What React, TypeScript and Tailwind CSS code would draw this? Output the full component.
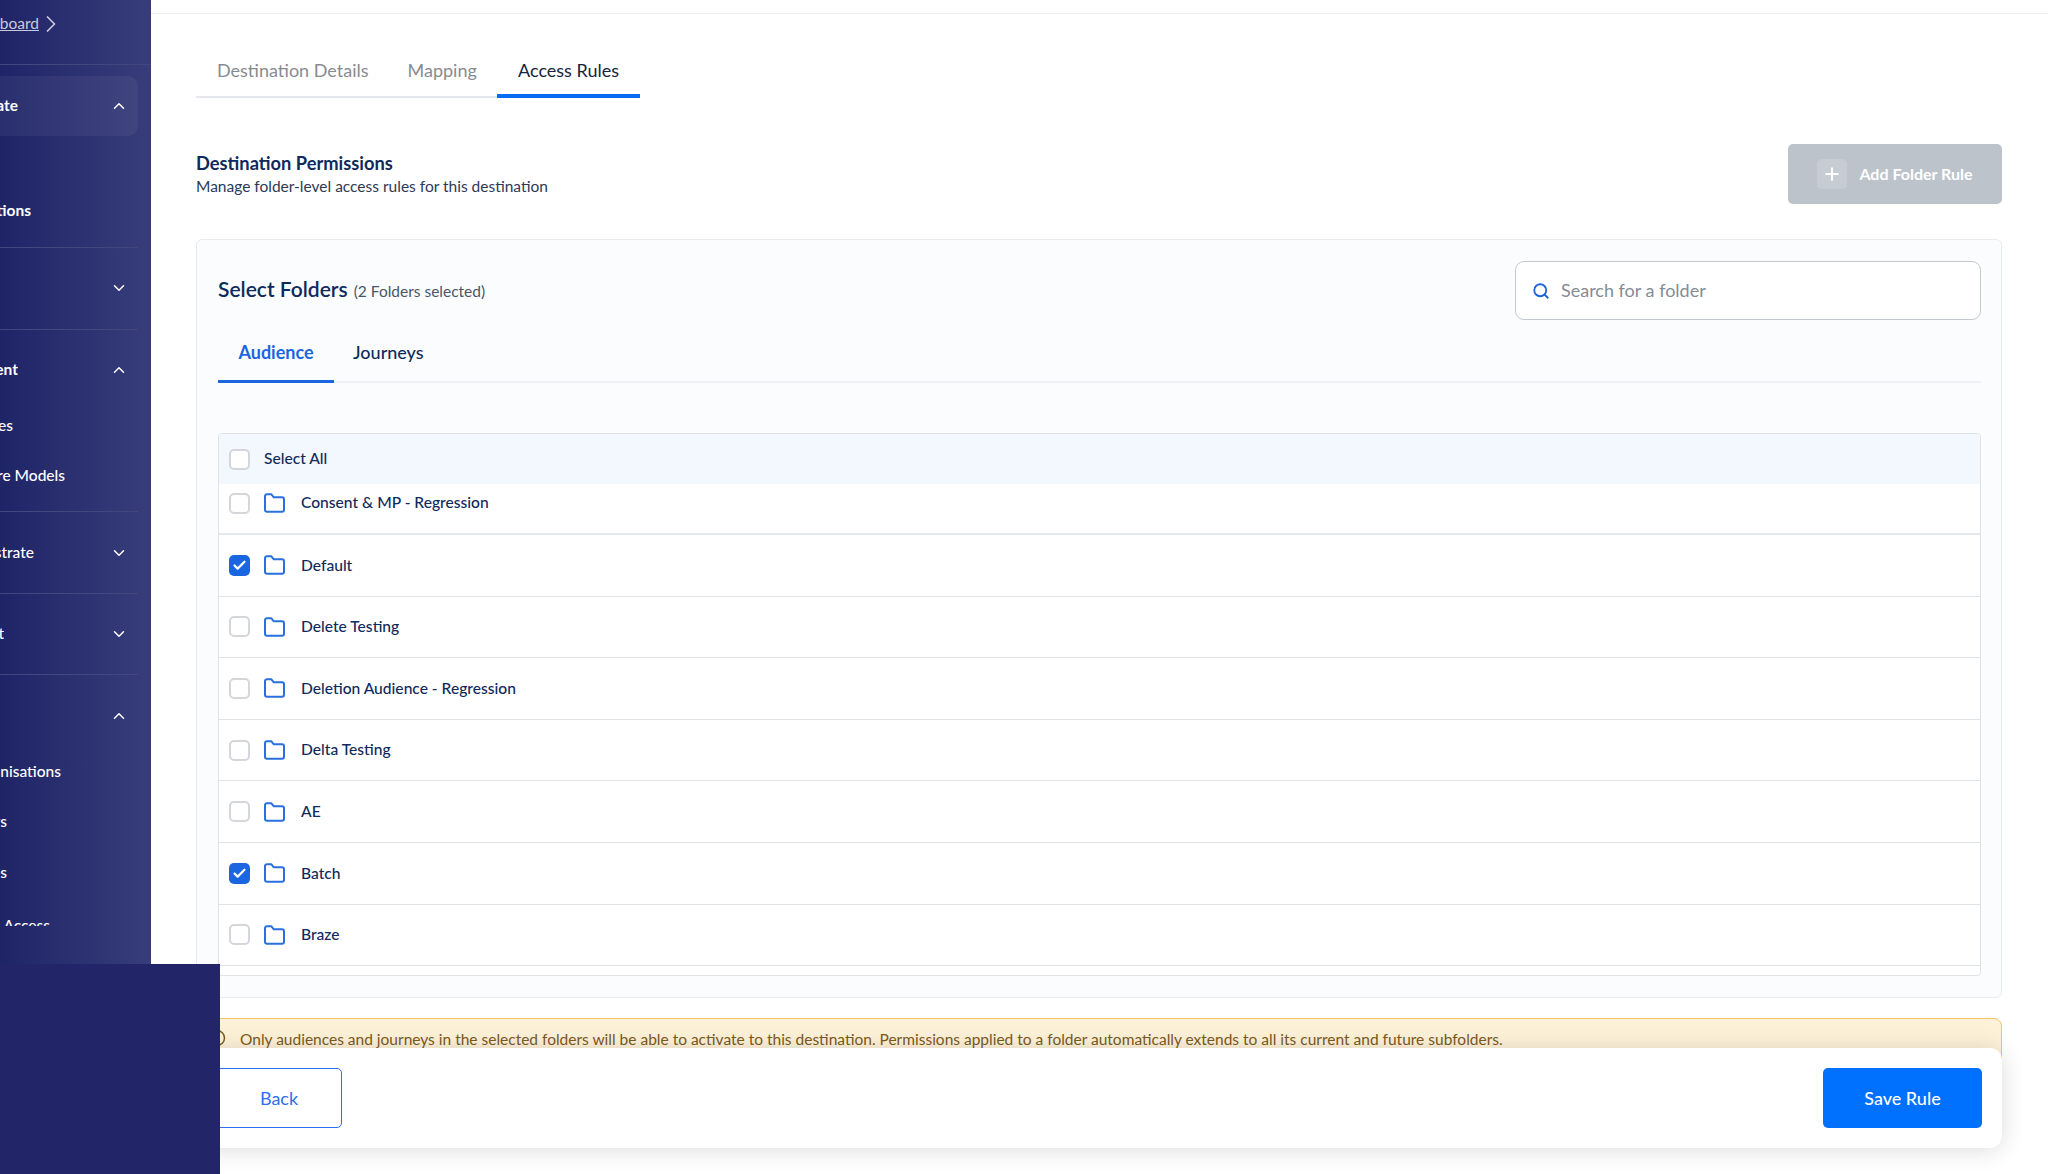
import { Check, ChevronDown, ChevronRight, ChevronUp, Info, Plus, Search } from 'lucide-react';

const folders = [
  { name: 'Default', checked: true },
  { name: 'Delete Testing', checked: false },
  { name: 'Deletion Audience - Regression', checked: false },
  { name: 'Delta Testing', checked: false },
  { name: 'AE', checked: false },
  { name: 'Batch', checked: true },
  { name: 'Braze', checked: false },
];

function Checkbox({ checked }: { checked?: boolean }) {
  if (checked) {
    return (
      <span className="flex h-[21px] w-[21px] shrink-0 items-center justify-center rounded-[5px] bg-[#1a66e0]">
        <Check size={15} strokeWidth={3.5} className="text-white" />
      </span>
    );
  }
  return <span className="h-[21px] w-[21px] shrink-0 rounded-[5px] border-2 border-[#d3d6da] bg-white" />;
}

function FolderIcon() {
  return (
    <svg width="21" height="20" viewBox="0 0 21 20" fill="none" className="ml-[14px] shrink-0 text-[#2a6fe0]">
      <path
        d="M3 1.2h4.2l2.6 3.1H18a2 2 0 0 1 2 2v10.5a2 2 0 0 1-2 2H3a2 2 0 0 1-2-2V3.2a2 2 0 0 1 2-2z"
        stroke="currentColor"
        strokeWidth="2"
        strokeLinejoin="round"
      />
    </svg>
  );
}

// the sidebar labels run off the left edge, so they are right aligned in a clipped box
function NavRow({ label, width, bold, open, className }: { label: string; width: string; bold?: boolean; open?: boolean; className?: string }) {
  return (
    <div className={`flex items-center justify-between ${className ?? ''}`}>
      <div className={`flex justify-end overflow-hidden whitespace-nowrap text-[15.5px] text-white ${width} ${bold ? 'font-bold' : 'font-medium'}`}>
        <span className="shrink-0">{label}</span>
      </div>
      {open === undefined ? null : open ? (
        <ChevronUp size={18} className="text-white" />
      ) : (
        <ChevronDown size={18} className="text-white" />
      )}
    </div>
  );
}

function Sidebar() {
  return (
    <aside className="h-[964px] w-[151px] shrink-0 overflow-hidden bg-gradient-to-r from-[#1f2467] to-[#383d7a]">
      <div className="h-[926px] overflow-hidden">
        <div className="flex h-[65px] items-center border-b border-[#42477f] pb-[17px]">
          <div className="flex w-[39px] justify-end overflow-hidden whitespace-nowrap text-[15.5px] text-[#c9cbdc] underline">
            <span className="shrink-0">Dashboard</span>
          </div>
          <ChevronRight size={28} strokeWidth={1.5} className="-ml-[2px] text-[#c9cbdc]" />
        </div>
        <div className="mr-[13px] border-b border-[#42477f] pt-[11px]">
          <NavRow label="Activate" width="w-[18px]" bold open className="h-[60px] rounded-r-[10px] bg-white/5 pr-[10px]" />
          <NavRow label="Destinations" width="w-[31px]" bold className="mt-[52px] h-[59px] pb-[13px]" />
        </div>
        <div className="mr-[13px] flex h-[82px] items-center border-b border-[#42477f] pb-[2px]">
          <NavRow label="" width="w-[1px]" open={false} className="w-full pr-[10px]" />
        </div>
        <div className="mr-[13px] h-[182px] border-b border-[#42477f] pt-[19px]">
          <NavRow label="Enrichment" width="w-[18px]" bold open className="h-[42px] pr-[10px]" />
          <NavRow label="Features" width="w-[13px]" className="mt-[15px] h-[40px]" />
          <NavRow label="Feature Models" width="w-[65px]" className="mt-[10px] h-[40px]" />
        </div>
        <div className="mr-[13px] flex h-[82px] items-center border-b border-[#42477f]">
          <NavRow label="Orchestrate" width="w-[34px]" open={false} className="w-full pr-[10px]" />
        </div>
        <div className="mr-[13px] flex h-[81px] items-center border-b border-[#42477f]">
          <NavRow label="Report" width="w-[4px]" open={false} className="w-full pr-[10px]" />
        </div>
        <NavRow label="" width="w-[1px]" open className="mr-[13px] mt-[20px] h-[42px] pr-[10px]" />
        <NavRow label="Organisations" width="w-[61px]" className="mt-[15px] h-[40px]" />
        <NavRow label="Users" width="w-[7px]" className="mt-[10px] h-[40px]" />
        <NavRow label="Roles" width="w-[7px]" className="mt-[11px] h-[40px]" />
        <NavRow label="Access" width="w-[50px]" className="mt-[13px] h-[40px]" />
      </div>
    </aside>
  );
}

export default function App() {
  return (
    <div className="relative flex h-[1174px] w-[2048px] overflow-hidden bg-white font-['Lato',sans-serif]">
      <Sidebar />
      <main className="min-w-0 flex-1">
        <div className="h-[14px] border-b border-[#eceef1]" />

        <div className="pl-[45px] pr-[46px]">
          <div className="mt-[38px] flex h-[46px] text-[18px] text-[#878b91]">
            <div className="flex w-[301px] items-start border-b-2 border-[#e4e7eb] pl-[21px] pt-[5px]">
              <span>Destination Details</span>
              <span className="ml-[39px]">Mapping</span>
            </div>
            <div className="w-[143px] border-b-4 border-[#0a6cf5] pt-[5px] text-center text-[#16233f]">Access Rules</div>
          </div>

          <div className="mt-[46px] flex h-[60px] items-center justify-between">
            <div>
              <h2 className="text-[18.3px] font-bold leading-[24px] text-[#0f2a5c]">Destination Permissions</h2>
              <p className="text-[15.5px] leading-[22px] text-[#2c3a55]">Manage folder-level access rules for this destination</p>
            </div>
            <button className="flex h-[60px] w-[214px] items-center justify-center gap-[12px] rounded-[5px] bg-[#bdc3ca] text-[16px] font-bold text-white">
              <span className="flex h-[30px] w-[30px] items-center justify-center rounded-[5px] bg-white/15">
                <Plus size={20} strokeWidth={2.5} />
              </span>
              Add Folder Rule
            </button>
          </div>

          <section className="mt-[35px] h-[759px] rounded-[6px] border border-[#e8ebef] bg-[#fbfcfd] pl-[21px] pr-[20px] pt-[21px]">
            <div className="flex h-[59px] items-center justify-between">
              <div className="flex -translate-y-[2px] items-baseline gap-[6px]">
                <h3 className="text-[21px] font-semibold text-[#0f2a5c]">Select Folders</h3>
                <span className="text-[15.5px] text-[#4a5568]">(2 Folders selected)</span>
              </div>
              <div className="flex h-[59px] w-[466px] items-center gap-[11px] rounded-[9px] border border-[#c4c9cf] bg-white pl-[16px]">
                <Search size={18} strokeWidth={2.4} className="text-[#1f63d8]" />
                <span className="text-[18px] text-[#858c95]">Search for a folder</span>
              </div>
            </div>

            <div className="mt-[7px] flex h-[56px] border-b-2 border-[#eef0f3] text-[18px]">
              <div className="h-[56px] w-[116px] border-b-[3px] border-[#1a66e0] pt-[12px] text-center font-bold text-[#1a66e0]">Audience</div>
              <div className="pl-[19px] pt-[12px] font-medium text-[#0f2a5c]">Journeys</div>
            </div>

            <div className="mt-[50px] h-[543px] overflow-hidden rounded-[4px] border border-[#dfe3e8] bg-white text-[15.6px] font-medium text-[#0f2a5c]">
              <div className="flex h-[50px] items-center gap-[14px] bg-[#f3f7fe] pl-[10px]">
                <Checkbox />
                <span>Select All</span>
              </div>
              <div className="flex h-[51px] items-center border-b-2 border-[#e6e9ec] pb-[11px] pl-[10px]">
                <Checkbox />
                <FolderIcon />
                <span className="ml-[16px]">Consent &amp; MP - Regression</span>
              </div>
              {folders.map((folder) => (
                <div key={folder.name} className="flex h-[61.6px] items-center border-b border-[#dfe3e8] pl-[10px]">
                  <Checkbox checked={folder.checked} />
                  <FolderIcon />
                  <span className="ml-[16px]">{folder.name}</span>
                </div>
              ))}
            </div>
          </section>

          <div className="mt-[20px] flex h-[50px] items-start gap-[14px] rounded-[8px] border border-[#f5c26b] bg-[#fdf1d8] pl-[11px] pt-[9px] text-[15.5px] text-[#7a5a1e]">
            <Info size={18} className="mt-[1px]" />
            <span>Only audiences and journeys in the selected folders will be able to activate to this destination. Permissions applied to a folder automatically extends to all its current and future subfolders.</span>
          </div>

          <div className="relative -mt-[20px] flex h-[100px] items-center justify-between rounded-[12px] bg-white px-[20px] shadow-[0_2px_24px_rgba(0,0,0,0.14)]">
            <button className="h-[60px] w-[126px] rounded-[5px] border border-[#2f6fed] text-[18px] text-[#2f6fed]">Back</button>
            <button className="h-[60px] w-[159px] rounded-[5px] bg-[#0070ff] text-[18px] font-medium text-white">Save Rule</button>
          </div>
        </div>
      </main>

      <div className="absolute bottom-0 left-0 h-[210px] w-[220px] bg-[#222668]" />
    </div>
  );
}
